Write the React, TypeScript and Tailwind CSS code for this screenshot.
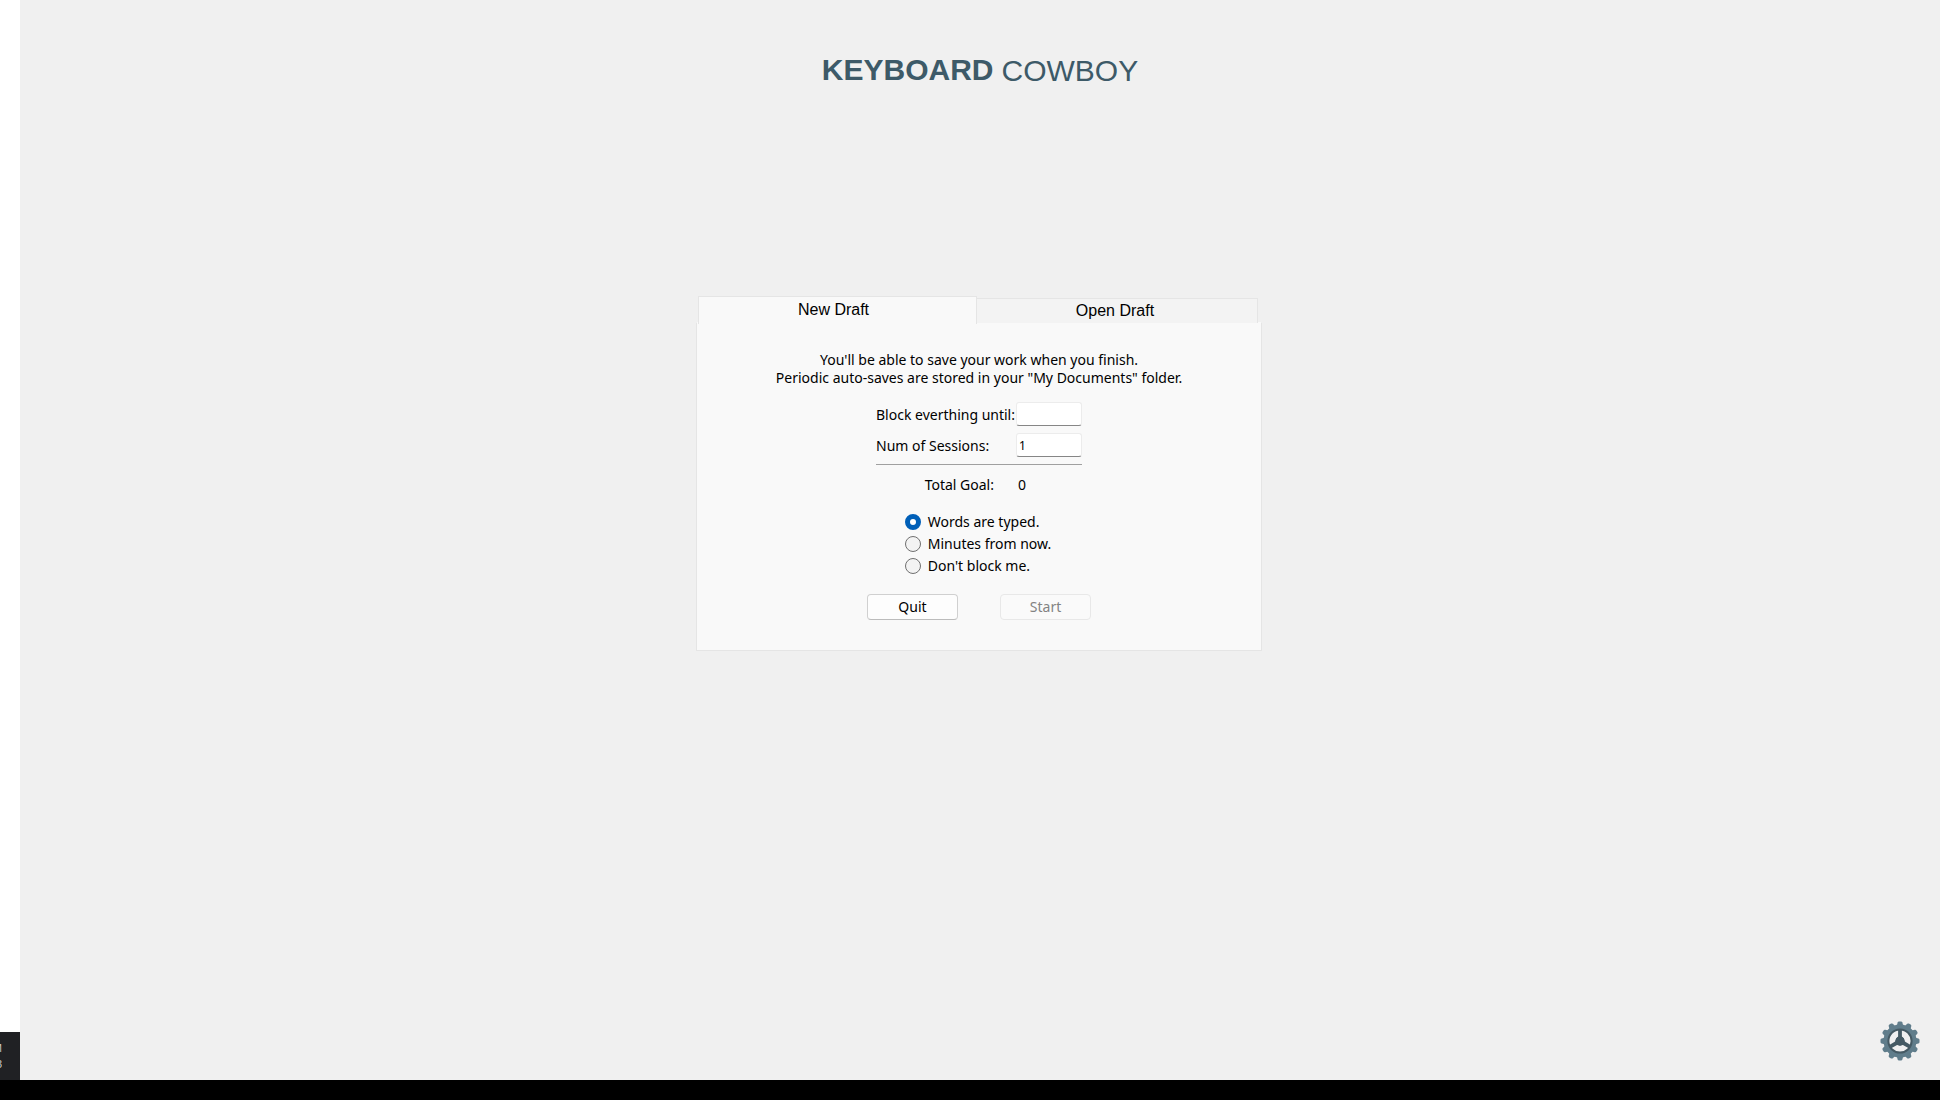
import { useState } from "react";

const MODES = ["Words are typed.", "Minutes from now.", "Don't block me."];
const TEETH = [0, 30, 60, 90, 120, 150, 180, 210, 240, 270, 300, 330];

function Gear() {
  return (
    <svg viewBox="-20 -20 40 40" className="size-10" aria-hidden="true">
      {TEETH.map((a) => (
        <path key={a} d="M-3.4 -14.5L-2.4 -18.4Q-2.1 -19.5 -1 -19.5H1Q2.1 -19.5 2.4 -18.4L3.4 -14.5Z" fill="#607d8b" transform={`rotate(${a})`} />
      ))}
      <circle r="14" fill="none" stroke="#607d8b" strokeWidth="5" />
      <circle r="11.6" fill="none" stroke="#455a64" strokeWidth="2" />
      {[0, 120, 240].map((a) => (
        <path key={a} d="M-1.9 -11.2H1.9V-4.5L4 -2V2H-4V-2L-1.9 -4.5Z" fill="#455a64" transform={`rotate(${a})`} />
      ))}
      <circle r="4.6" fill="#455a64" />
    </svg>
  );
}

export default function App() {
  const [mode, setMode] = useState(0);
  const [tab, setTab] = useState(0);
  const [amount, setAmount] = useState("");
  const [sessions, setSessions] = useState("1");
  const field =
    "h-6 w-[66px] rounded-[3px] border border-[#ececec] border-b-[#868686] bg-white px-0.5 text-xs outline-none";

  return (
    <div className="flex min-h-screen flex-col bg-[#f0f0f0] font-['Noto_Sans',sans-serif] text-sm leading-[18px] text-black">
      <div className="flex grow">
        <aside className="flex w-5 shrink-0 flex-col overflow-hidden bg-white">
          <div className="mt-auto flex h-12 flex-col items-start justify-center bg-[#202124] font-['Liberation_Sans',sans-serif] text-[11px] leading-4 text-[#c8c8c8]">
            <span className="flex w-0.5 justify-end overflow-hidden">M</span>
            <span className="flex w-0.5 justify-end overflow-hidden">3</span>
          </div>
        </aside>

        <main className="flex grow flex-col items-center">
          <h1 className="mt-[52px] flex gap-2 font-['Liberation_Sans',Arial,sans-serif] text-[30px] leading-9 text-[#3d5a68]">
            <span className="font-bold">KEYBOARD</span>
            <span className="pt-px">COWBOY</span>
          </h1>

          <section className="mt-[207px] mr-0.5 w-[566px]">
            <div role="tablist" className="flex items-end pr-1 pl-0.5 font-['Liberation_Sans',Arial,sans-serif] text-base leading-5">
              <button
                role="tab"
                aria-selected={tab === 0}
                onClick={() => setTab(0)}
                className="relative -mb-px h-7 w-[279px] border border-b-0 border-[#e5e5e5] bg-[#f9f9f9] pr-2 pb-0.5"
              >
                New Draft
              </button>
              <button
                role="tab"
                aria-selected={tab === 1}
                onClick={() => setTab(1)}
                className="h-[25px] flex-1 border border-b-0 border-l-0 border-[#e5e5e5] bg-[#f3f3f3] pr-1"
              >
                Open Draft
              </button>
            </div>

            <div role="tabpanel" className="-mt-px flex flex-col items-center border border-t-[#f9f9f9] border-[#e5e5e5] bg-[#f9f9f9] pt-7 pb-[30px]">
              <p className="text-center">
                You'll be able to save your work when you finish.
                <br />
                Periodic auto-saves are stored in your "My Documents" folder.
              </p>

              <div className="mt-[15px] grid w-[206px] gap-y-[7px] border-b border-[#a0a0a0] pb-[7px]">
                <div className="flex items-center justify-between">
                  <label htmlFor="amount" className="pt-px whitespace-nowrap">Block everthing until:</label>
                  <input id="amount" value={amount} onChange={(e) => setAmount(e.target.value)} className={field} />
                </div>
                <div className="flex items-center justify-between">
                  <label htmlFor="sessions" className="pt-px whitespace-nowrap">Num of Sessions:</label>
                  <input id="sessions" value={sessions} onChange={(e) => setSessions(e.target.value)} className={field} />
                </div>
              </div>

              <div className="mt-[11px] flex w-[206px] justify-end">
                <span>Total Goal:</span>
                <output className="ml-6 w-16">{(Number(amount) || 0) * (Number(sessions) || 0)}</output>
              </div>

              <fieldset className="mt-[19px] mr-0.5 grid gap-1">
                {MODES.map((label, i) => (
                  <label key={label} className="flex items-center gap-[7px]">
                    <input
                      type="radio"
                      name="mode"
                      checked={mode === i}
                      onChange={() => setMode(i)}
                      className="size-4 appearance-none rounded-full border border-[#707070] bg-[#f3f3f3] checked:border-5 checked:border-[#005fb8] checked:bg-white"
                    />
                    {label}
                  </label>
                ))}
              </fieldset>

              <div className="mt-[19px] flex gap-[42px]">
                <button className="h-[26px] w-[91px] rounded border border-[#d0d0d0] border-b-[#bcbcbc] bg-[#fdfdfd]">Quit</button>
                <button disabled className="h-[26px] w-[91px] rounded border border-[#e8e8e8] bg-[#fafafa] text-[#838383]">Start</button>
              </div>
            </div>
          </section>

          <button aria-label="Settings" className="mt-auto mr-5 mb-[19px] self-end">
            <Gear />
          </button>
        </main>
      </div>
      <footer className="h-5 bg-black" />
    </div>
  );
}
